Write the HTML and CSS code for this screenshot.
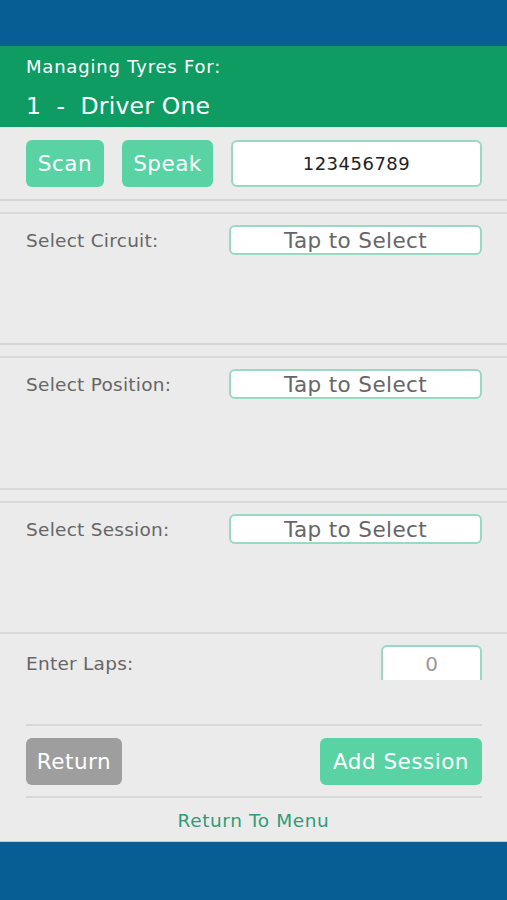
FILE: index.html
```html
<!DOCTYPE html>
<html>
<head>
<meta charset="utf-8">
<link rel="stylesheet" href="styles.css">
</head>
<body>
<div class="topbar"></div>
<div class="header">
  <div class="header-sub">Managing Tyres For:</div>
  <div class="header-title">1 &nbsp;- &nbsp;Driver One</div>
</div>
<div class="main">
  <div class="scanrow">
    <div class="btn btn-green btn-scan">Scan</div>
    <div class="btn btn-green btn-speak">Speak</div>
    <div class="field field-code">123456789</div>
  </div>
  <div class="section">
    <div class="row">
      <div class="label">Select Circuit:</div>
      <div class="field field-select">Tap to Select</div>
    </div>
  </div>
  <div class="section">
    <div class="row">
      <div class="label">Select Position:</div>
      <div class="field field-select">Tap to Select</div>
    </div>
  </div>
  <div class="section">
    <div class="row">
      <div class="label">Select Session:</div>
      <div class="field field-select">Tap to Select</div>
    </div>
  </div>
  <div class="laps">
    <div class="label">Enter Laps:</div>
    <div class="field field-laps">0</div>
  </div>
  <div class="actions">
    <div class="btn btn-grey">Return</div>
    <div class="btn btn-green btn-add">Add Session</div>
  </div>
  <div class="menu-link">Return To Menu</div>
</div>
<div class="bottombar"></div>
</body>
</html>
```

FILE: styles.css
```css
* { box-sizing: border-box; }
html, body { margin: 0; padding: 0; }
body {
  width: 507px;
  height: 900px;
  overflow: hidden;
  background: #ebebeb;
  font-family: "DejaVu Sans", sans-serif;
  display: flex;
  flex-direction: column;
}
.topbar { height: 46px; background: #065e94; flex: none; }
.header {
  height: 81px;
  background: #0f9c62;
  color: #ffffff;
  padding: 10px 0 0 26px;
  flex: none;
}
.header-sub { font-size: 18px; line-height: 22px; letter-spacing: 0.8px; }
.header-title { font-size: 23.5px; line-height: 28px; margin-top: 14px; letter-spacing: 0.2px; }
.main { flex: 1; display: flex; flex-direction: column; }
.scanrow {
  display: flex;
  align-items: center;
  height: 74px;
  padding: 13px 25px 12px 26px;
  border-bottom: 2px solid #d8d8d8;
  gap: 18px;
}
.btn {
  height: 47px;
  border-radius: 6px;
  color: #ffffff;
  font-size: 21.5px;
  letter-spacing: 0.5px;
  display: flex;
  align-items: center;
  justify-content: center;
}
.btn-green { background: #59d3a4; }
.btn-grey { background: #9e9e9e; width: 96px; }
.btn-scan { width: 78px; }
.btn-speak { width: 91px; }
.field {
  background: #ffffff;
  border: 2px solid #9ad9c1;
  border-radius: 6px;
  display: flex;
  align-items: center;
  justify-content: center;
}
.field-code {
  flex: 1;
  height: 47px;
  font-size: 18px;
  letter-spacing: 0.5px;
  color: #222222;
}
.section {
  margin-top: 11px;
  border-top: 2px solid #d8d8d8;
  border-bottom: 2px solid #d8d8d8;
  height: 133px;
  padding: 11px 25px 0 26px;
}
.section:nth-of-type(3) { height: 134px; }
.row { display: flex; align-items: center; justify-content: space-between; }
.label { font-size: 18.5px; letter-spacing: 0.25px; color: #666666; }
.field-select {
  width: 253px;
  height: 30px;
  font-size: 21.5px;
  letter-spacing: 0.4px;
  color: #666666;
}
.laps {
  display: flex;
  justify-content: space-between;
  align-items: flex-start;
  padding: 11px 25px 0 26px;
  height: 90px;
}
.laps .label { margin-top: 8px; }
.field-laps {
  width: 101px;
  height: 35px;
  border-bottom: none;
  border-radius: 6px 6px 0 0;
  font-size: 20px;
  color: #999999;
}
.actions {
  margin: 0 25px 0 26px;
  border-top: 2px solid #d8d8d8;
  border-bottom: 2px solid #d8d8d8;
  height: 74px;
  display: flex;
  justify-content: space-between;
  align-items: center;
}
.btn-add { width: 162px; }
.menu-link {
  text-align: center;
  color: #2e9c77;
  font-size: 18.5px;
  letter-spacing: 0.6px;
  padding-top: 12px;
}
.bottombar {
  height: 59px;
  background: #065e94;
  border-top: 1px solid #a9d6e6;
  flex: none;
}
```
